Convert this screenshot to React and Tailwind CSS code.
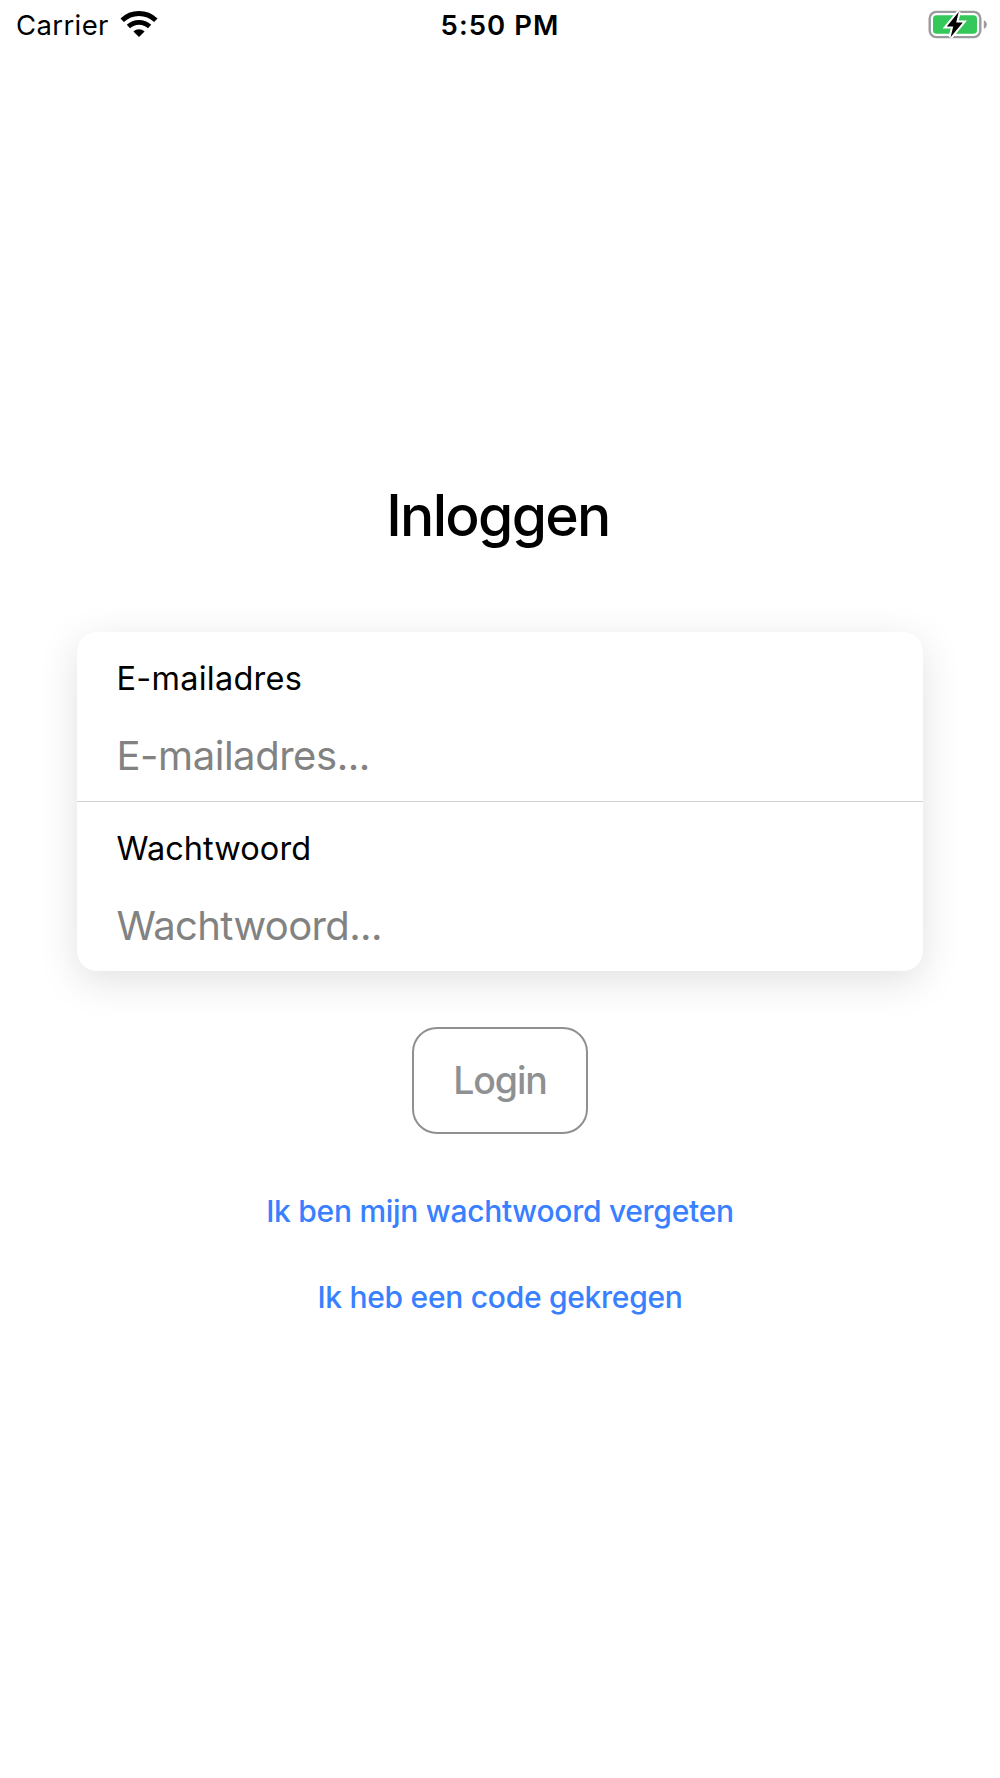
import React, { useState } from "react";

const fields = [
  {
    id: "email",
    type: "email",
    label: "E-mailadres",
    labelTracking: "tracking-[0.25px]",
    placeholderTracking: "tracking-[-0.45px]",
  },
  {
    id: "password",
    type: "password",
    label: "Wachtwoord",
    labelTracking: "tracking-[0.05px]",
    placeholderTracking: "tracking-[-0.62px]",
  },
];

function WifiIcon() {
  return (
    <svg className="w-[38px] h-[28px] -mt-[3px]" viewBox="0 0 38 28" fill="none">
      <path d="M2.2 10.2A24.2 24.2 0 0 1 35.8 10.2" stroke="black" strokeWidth="5" />
      <path d="M8.4 16.6A15.4 15.4 0 0 1 29.6 16.6" stroke="black" strokeWidth="4.8" />
      <path d="M13.4 21.4A8.2 8.2 0 0 1 24.6 21.4L19 27Z" fill="black" />
    </svg>
  );
}

function BatteryIcon() {
  return (
    <svg className="w-[60px] h-[30px] -mt-[2px]" viewBox="0 0 60 30" fill="none">
      <rect x="1.7" y="1.9" width="50.6" height="25.2" rx="6.5" stroke="#9b9b9d" strokeWidth="2.4" />
      <rect x="5" y="5.2" width="44" height="18.6" rx="3.6" fill="#34c759" />
      <path d="M55.8 10.2C59.8 11.6 59.8 17.4 55.8 18.8Z" fill="#9b9b9d" />
      <path d="M30.8 1.8L18.8 16.4H25.2L22.6 27.2L34.8 12.4H28.2Z" fill="black" stroke="white" strokeWidth="4" paintOrder="stroke" />
    </svg>
  );
}

function StatusBar() {
  return (
    <header className="grid grid-cols-3 items-center h-[51px] pl-4 pr-3 text-[27px] leading-[51px]">
      <div className="flex items-center gap-[11px]">
        <span className="text-[27.5px] tracking-[0.38px]">Carrier</span>
        <WifiIcon />
      </div>
      <span className="pr-1 text-center text-[27.5px] font-semibold tracking-[1.05px]">5:50 PM</span>
      <div className="flex justify-end">
        <BatteryIcon />
      </div>
    </header>
  );
}

export default function App() {
  const [values, setValues] = useState({ email: "", password: "" });

  return (
    <div className="min-h-[1778px] bg-white text-black font-['Inter',sans-serif]">
      <StatusBar />

      <main className="flex flex-col items-center pt-[430px]">
        <h1 className="pr-1 text-[57px] leading-[70px] font-medium tracking-[-1.7px]">Inloggen</h1>

        {/* Credentials card */}
        <form className="w-[846px] mt-[81px] rounded-[20px] bg-white shadow-[0_10px_40px_rgba(0,0,0,0.12)] divide-y divide-[#d1d1d3]">
          {fields.map((field) => (
            <div key={field.id} className="flex flex-col pt-[26px] pb-[21px] px-[39.5px]">
              <label htmlFor={field.id} className={`text-[32.5px] leading-[41px] ${field.labelTracking}`}>
                {field.label}
              </label>
              <input
                id={field.id}
                type={field.type}
                value={values[field.id]}
                onChange={(e) => setValues({ ...values, [field.id]: e.target.value })}
                placeholder={`${field.label}...`}
                className={`mt-8 h-[49px] text-[40px] leading-[49px] outline-none placeholder:text-[#828282] ${field.placeholderTracking}`}
              />
            </div>
          ))}
        </form>

        <button className="w-[176px] h-[107px] mt-14 pt-px rounded-[25px] border-2 border-[#8e9092] text-[37.5px] font-medium tracking-[-1.1px] text-[#8e9092]">
          Login
        </button>

        {/* Secondary actions */}
        <a href="#" className="mt-[55px] text-[30px] leading-[44px] font-medium tracking-[-0.28px] text-[#3880ff]">
          Ik ben mijn wachtwoord vergeten
        </a>
        <a href="#" className="mt-[42px] text-[30px] leading-[44px] font-medium tracking-[-0.28px] text-[#3880ff]">
          Ik heb een code gekregen
        </a>
      </main>
    </div>
  );
}
